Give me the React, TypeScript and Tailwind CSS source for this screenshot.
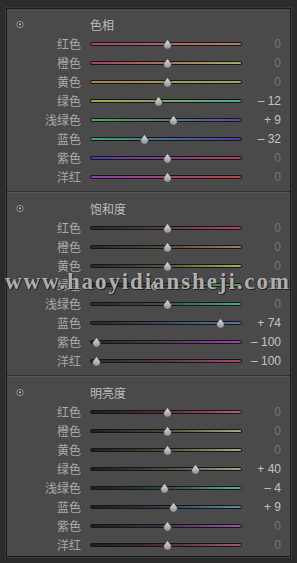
type Row = { label: string; value: number; track: string };
type Section = { title: string; rows: Row[] };

const sections: Section[] = [
  {
    title: "色相",
    rows: [
      { label: "红色", value: 0, track: "bg-[linear-gradient(to_right,#a8456e,#b0825e)]" },
      { label: "橙色", value: 0, track: "bg-[linear-gradient(to_right,#a8405e,#a3ad6a)]" },
      { label: "黄色", value: 0, track: "bg-[linear-gradient(to_right,#a8804e,#98ab62)]" },
      { label: "绿色", value: -12, track: "bg-[linear-gradient(to_right,#a6a452,#4ea48e)]" },
      { label: "浅绿色", value: 9, track: "bg-[linear-gradient(to_right,#52a452,#5a4aa6)]" },
      { label: "蓝色", value: -32, track: "bg-[linear-gradient(to_right,#44a082,#4a3ca6)]" },
      { label: "紫色", value: 0, track: "bg-[linear-gradient(to_right,#503eaa,#b0405c)]" },
      { label: "洋红", value: 0, track: "bg-[linear-gradient(to_right,#8a40a6,#b04648)]" },
    ],
  },
  {
    title: "饱和度",
    rows: [
      { label: "红色", value: 0, track: "bg-[linear-gradient(to_right,#2a2a2a,#5a4048,#b84068)]" },
      { label: "橙色", value: 0, track: "bg-[linear-gradient(to_right,#2a2a2a,#584a3c,#a47e52)]" },
      { label: "黄色", value: 0, track: "bg-[linear-gradient(to_right,#2a2a2a,#585838,#aeae4a)]" },
      { label: "绿色", value: -19, track: "bg-[linear-gradient(to_right,#2a2a2a,#40583c,#5ea856)]" },
      { label: "浅绿色", value: 0, track: "bg-[linear-gradient(to_right,#2a2a2a,#3a5850,#3ea894)]" },
      { label: "蓝色", value: 74, track: "bg-[linear-gradient(to_right,#2a2a2a,#3c4a5a,#5478a8)]" },
      { label: "紫色", value: -100, track: "bg-[linear-gradient(to_right,#2a2a2a,#4e3a58,#9c40b0)]" },
      { label: "洋红", value: -100, track: "bg-[linear-gradient(to_right,#2a2a2a,#583a4c,#a84478)]" },
    ],
  },
  {
    title: "明亮度",
    rows: [
      { label: "红色", value: 0, track: "bg-[linear-gradient(to_right,#1e1e1e,#5a2c3c,#b85a78)]" },
      { label: "橙色", value: 0, track: "bg-[linear-gradient(to_right,#1e1e1e,#4e4a38,#a8a888)]" },
      { label: "黄色", value: 0, track: "bg-[linear-gradient(to_right,#1e1e1e,#4e4e36,#a8ac84)]" },
      { label: "绿色", value: 40, track: "bg-[linear-gradient(to_right,#1e1e1e,#4a4c38,#a0a686)]" },
      { label: "浅绿色", value: -4, track: "bg-[linear-gradient(to_right,#1e1e1e,#2c4c44,#5cac98)]" },
      { label: "蓝色", value: 9, track: "bg-[linear-gradient(to_right,#1e1e1e,#2c4050,#5c8ca4)]" },
      { label: "紫色", value: 0, track: "bg-[linear-gradient(to_right,#1e1e1e,#44304e,#9a58a8)]" },
      { label: "洋红", value: 0, track: "bg-[linear-gradient(to_right,#1e1e1e,#4c2c3c,#a45a74)]" },
    ],
  },
];

function formatValue(v: number) {
  if (v === 0) return "0";
  return v > 0 ? `+ ${v}` : `– ${Math.abs(v)}`;
}

function Thumb({ value }: { value: number }) {
  const left = 76.5 + (value / 100) * 71 - 4.5;
  return (
    <svg
      className="absolute top-[-4px]"
      style={{ left }}
      width="9"
      height="10"
      viewBox="0 0 9 10"
    >
      <defs>
        <linearGradient id="thumbFill" x1="0" y1="0" x2="0" y2="1">
          <stop offset="0" stopColor="#e2e2e2" />
          <stop offset="1" stopColor="#8e8e8e" />
        </linearGradient>
      </defs>
      <path
        d="M4.5 0.5 L8.2 5.2 A3.9 3.9 0 1 1 0.8 5.2 Z"
        fill="url(#thumbFill)"
        stroke="#2a2a2a"
        strokeWidth="0.6"
      />
    </svg>
  );
}

function SliderRow({ row }: { row: Row }) {
  return (
    <div className="flex h-[19px] items-center">
      <div className="w-[74px] text-right text-[12px] leading-none text-[#aaaaaa]">
        {row.label}
      </div>
      <div className="relative ml-[9px] h-[4px] w-[152px] rounded-full border border-[#161616] bg-[#161616]">
        <div className={`h-full w-full rounded-full ${row.track}`} />
        <Thumb value={row.value} />
      </div>
      <div
        className={`flex-1 pr-[9px] text-right font-['Liberation_Sans',sans-serif] text-[12px] leading-none ${
          row.value === 0 ? "text-[#767676]" : "text-[#c4c4c4]"
        }`}
      >
        {formatValue(row.value)}
      </div>
    </div>
  );
}

function Panel({ section, last }: { section: Section; last: boolean }) {
  return (
    <div className={last ? "pt-[6px] pb-[2px]" : "pt-[6px] pb-[5px]"}>
      <div className="flex h-[19px] items-center">
        <div className="ml-[9px] flex w-[8px] items-center justify-center">
          <svg width="9" height="9" viewBox="0 0 9 9">
            <circle cx="4.5" cy="4.5" r="3.6" fill="#3a3a3a" stroke="#9a9a9a" strokeWidth="1.1" />
            <circle cx="4.5" cy="4.5" r="1.3" fill="#b0b0b0" />
          </svg>
        </div>
        <div className="ml-[66px] text-[12px] leading-none text-[#bdbdbd]">{section.title}</div>
      </div>
      {section.rows.map((row, i) => (
        <SliderRow key={i} row={row} />
      ))}
    </div>
  );
}

export default function App() {
  return (
    <div className="relative h-[563px] w-[297px] overflow-hidden bg-[#2c2c2c] pt-[8px] pl-[6px] pr-[6px] font-['Noto_Sans_CJK_SC','Noto_Sans',sans-serif]">
      <div className="border border-[#1a1a1a] bg-[#4a4a4a] shadow-[0_0_0_1px_#3a3a3a]">
        {sections.map((s, i) => (
          <div key={s.title}>
            {i > 0 && <div className="h-[2px] border-t border-[#303030] border-b border-b-[#575757]" />}
            <Panel section={s} last={i === sections.length - 1} />
          </div>
        ))}
      </div>

      {/* watermark over the saturation panel */}
      <div className="absolute left-[5px] top-[270px] whitespace-nowrap font-['Liberation_Serif',serif] text-[23px] font-bold leading-none tracking-[1.9px] text-[#c8c8c8]/85 [text-shadow:1px_1px_0_#222222,-1px_0_0_#333333]">
        www.haoyidiansheji.com
      </div>
    </div>
  );
}
